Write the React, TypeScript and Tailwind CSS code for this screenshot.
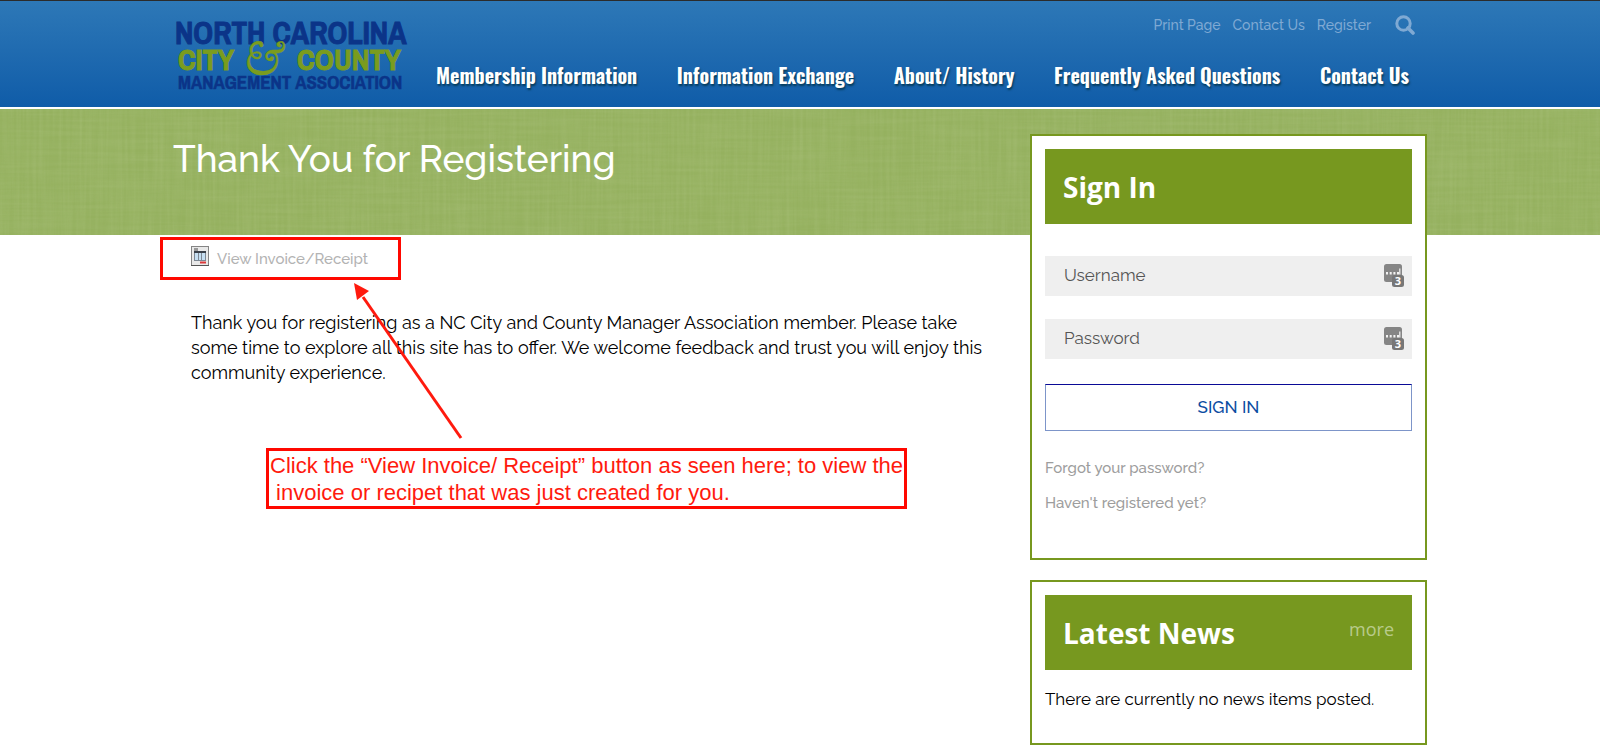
import type { ReactNode } from "react";

const topLinks = ["Print Page", "Contact Us", "Register"];

const navItems = [
    "Membership Information",
    "Information Exchange",
    "About/ History",
    "Frequently Asked Questions",
    "Contact Us",
];

const Logo = () => (
    <a href="#" aria-label="North Carolina City & County Management Association" className="mt-5 ml-1 shrink-0">
        <svg width="230" height="74" viewBox="0 0 230 74" overflow="visible" fontFamily="'Archivo Narrow', 'Libre Franklin', Roboto, sans-serif" fontWeight="700">
            <g fill="#0b3488" stroke="#0b3488" strokeWidth="0.9">
                <text x="-2" y="23" fontSize="31">NORTH CAROLINA</text>
                <text x="1" y="68" fontSize="19" strokeWidth="0.5">MANAGEMENT ASSOCIATION</text>
            </g>
            <g fill="#7a9c1e" stroke="#7a9c1e" strokeWidth="0.9">
                <text x="1" y="49" fontSize="30">CITY</text>
                <text x="120" y="49" fontSize="30">COUNTY</text>
                <text x="66" y="53" fontSize="46" fontFamily="'EB Garamond', 'Cormorant Garamond', 'Playfair Display', 'Libre Baskerville', 'Noto Sans', sans-serif" fontStyle="italic" fontWeight="400" strokeWidth="0.4">&amp;</text>
            </g>
        </svg>
    </a>
);

const SearchIcon = () => (
    <svg width="20" height="20" viewBox="0 0 20 20" fill="none" stroke="#7fa9d3" strokeWidth="3">
        <circle cx="8.5" cy="8.5" r="6.7" />
        <path d="M13 13l5 5" strokeWidth="3.6" strokeLinecap="round" />
    </svg>
);

const Header = () => (
    <header className="border-t border-[#2b2b2b] border-b-2 border-b-white bg-linear-to-b from-[#2d78b7] to-[#0f5ca8]">
        <div className="mx-auto flex h-[106px] max-w-[1254px]">
            <Logo />
            <div className="ml-[29px] flex flex-1 flex-col pr-[18px]">
                <div className="mt-3.5 flex items-center justify-end gap-3 text-sm leading-5 font-medium text-[#7fa9d3]">
                    {topLinks.map((label) => (
                        <a key={label} href="#">{label}</a>
                    ))}
                    <button type="button" aria-label="Search" className="-mr-1.5 ml-3">
                        <SearchIcon />
                    </button>
                </div>
                <nav className="mt-6 flex justify-between font-['Oswald',sans-serif] text-xl leading-8 font-bold text-white [text-shadow:1px_2px_2px_rgba(0,50,70,0.8)]">
                    {navItems.map((item) => (
                        <a key={item} href="#" className="whitespace-nowrap">{item}</a>
                    ))}
                </nav>
            </div>
        </div>
    </header>
);

// Green band with a woven linen look
const Band = () => (
    <svg aria-hidden="true" className="absolute inset-x-0 top-0 -z-10 h-[126px] w-full">
        <filter id="weft">
            <feTurbulence type="fractalNoise" baseFrequency="0.012 0.3" numOctaves="2" seed="4" />
            <feColorMatrix values="0 0 0 0 0.48  0 0 0 0 0.6  0 0 0 0 0.28  0.9 0 0 0 -0.28" />
        </filter>
        <filter id="warp">
            <feTurbulence type="fractalNoise" baseFrequency="0.3 0.012" numOctaves="2" seed="9" />
            <feColorMatrix values="0 0 0 0 0.66  0 0 0 0 0.76  0 0 0 0 0.46  0.9 0 0 0 -0.28" />
        </filter>
        <rect width="100%" height="100%" fill="#95b15f" />
        <rect width="100%" height="100%" filter="url(#weft)" opacity="0.3" />
        <rect width="100%" height="100%" filter="url(#warp)" opacity="0.2" />
    </svg>
);

const InvoiceIcon = () => (
    <svg width="18" height="20" viewBox="0 0 18 20">
        <rect x="0.5" y="0.5" width="17" height="19" fill="#e9e9e9" stroke="#858585" />
        <path d="M0 19.5h18" stroke="#555" />
        <rect x="3" y="2" width="4" height="3" fill="#999" />
        <rect x="3" y="5" width="12" height="10" fill="#7d8894" />
        <path d="M3 5h12v2H3z" fill="#3a4049" />
        <path d="M4 7h3v7H4zM8 7h2v7H8zM11 7h3v7h-3z" fill="#c6dff2" />
        <path d="M9 15.5h6v2H9z" fill="#dc3a3a" />
    </svg>
);

const PasswordManagerIcon = () => (
    <svg width="20" height="23" viewBox="0 0 20 23" className="pointer-events-none absolute top-2 right-2">
        <rect width="18" height="18" rx="2.5" fill="#858585" />
        <path d="M2 8h2v2.4H2zM5.7 8h2v2.4h-2zM9.4 8h2v2.4h-2zM13 8h2v2.4h-2zM15.2 4.5h1.2v6h-1.2z" fill="#f2f2f2" />
        <rect x="8" y="11" width="12" height="12" rx="2.5" fill="#777" />
        <text x="14" y="21" textAnchor="middle" fontSize="11" fontWeight="700" fontFamily="'Open Sans', sans-serif" fill="#fff">3</text>
    </svg>
);

const Panel = ({ title, action, children }: { title: string; action?: ReactNode; children: ReactNode }) => (
    <section className="border-2 border-[#77981f] bg-white p-[13px]">
        <div className="flex h-[75px] items-center justify-between bg-[#77981f] px-[18px]">
            <h2 className="font-['Open_Sans',sans-serif] text-[28px] font-bold text-white">{title}</h2>
            {action}
        </div>
        {children}
    </section>
);

const Field = ({ label, type }: { label: string; type: string }) => (
    <div className="relative">
        <input
            type={type}
            aria-label={label}
            placeholder={label}
            className="block h-10 w-full bg-[#efefef] pr-10 pb-0.5 pl-[19px] text-[17px] text-[#555] placeholder:text-[#555]"
        />
        <PasswordManagerIcon />
    </div>
);

const SignIn = () => (
    <Panel title="Sign In">
        <form className="mt-8 flex flex-col gap-[23px]">
            <Field label="Username" type="text" />
            <Field label="Password" type="password" />
            <button type="button" className="mt-0.5 h-[47px] border border-[#7d95c9] border-t-[#0a0a96] text-[17px] font-medium text-[#0c4da2]">
                SIGN IN
            </button>
        </form>
        <div className="mt-[25px] mb-[30px] flex flex-col items-start gap-[11px] text-[15px] leading-6 font-medium text-[#9d9d9d]">
            <a href="#">Forgot your password?</a>
            <a href="#">Haven't registered yet?</a>
        </div>
    </Panel>
);

const LatestNews = () => (
    <Panel
        title="Latest News"
        action={<a href="#" className="mb-2 font-['Open_Sans',sans-serif] text-lg text-[#b9cb8b]">more</a>}
    >
        <p className="mt-[15px] mb-[17px] text-[17px] leading-7 text-black">There are currently no news items posted.</p>
    </Panel>
);

const Arrow = () => (
    <svg width="110" height="158" viewBox="0 0 110 158" className="absolute top-[46px] left-[194px]">
        <path d="M107 155L9 14" stroke="#ff1a0e" strokeWidth="3" />
        <path d="M0 0l15 8-12 9z" fill="#ff1a0e" />
    </svg>
);

const Content = () => (
    <main className="flex-1">
        <h1 className="pt-[25px] text-[37px] leading-[50px] font-medium text-white">Thank You for Registering</h1>
        <div className="relative -ml-[13px] mt-[53px]">
            <div className="flex h-[43px] w-[241px] border-3 border-[#ff0800] pl-7">
                <a href="#" className="flex items-start gap-2 pt-1.5 text-[15px] leading-[26px] font-medium text-[#b3b3b3]">
                    <InvoiceIcon />
                    View Invoice/Receipt
                </a>
            </div>
            <p className="mt-[30px] ml-[31px] text-lg leading-[25px] text-black">
                Thank you for registering as a NC City and County Manager Association member. Please take<br />
                some time to explore all this site has to offer. We welcome feedback and trust you will enjoy this<br />
                community experience.
            </p>
            <p className="mt-[63px] ml-[106px] w-[641px] border-3 border-[#ff0800] pt-px pl-px font-['Liberation_Sans',sans-serif] text-[22px] leading-[27px] whitespace-pre text-[#ff1a0e]">
                {"Click the “View Invoice/ Receipt” button as seen here; to view the\n invoice or recipet that was just created for you."}
            </p>
            <Arrow />
        </div>
    </main>
);

export default function App() {
    return (
        <div className="min-h-screen bg-white font-['Raleway','Lato',sans-serif]">
            <Header />
            <div className="relative isolate">
                <Band />
                <div className="mx-auto flex max-w-[1254px] items-start">
                    <Content />
                    <aside className="mt-[25px] flex w-[397px] flex-col gap-5">
                        <SignIn />
                        <LatestNews />
                    </aside>
                </div>
            </div>
        </div>
    );
}
